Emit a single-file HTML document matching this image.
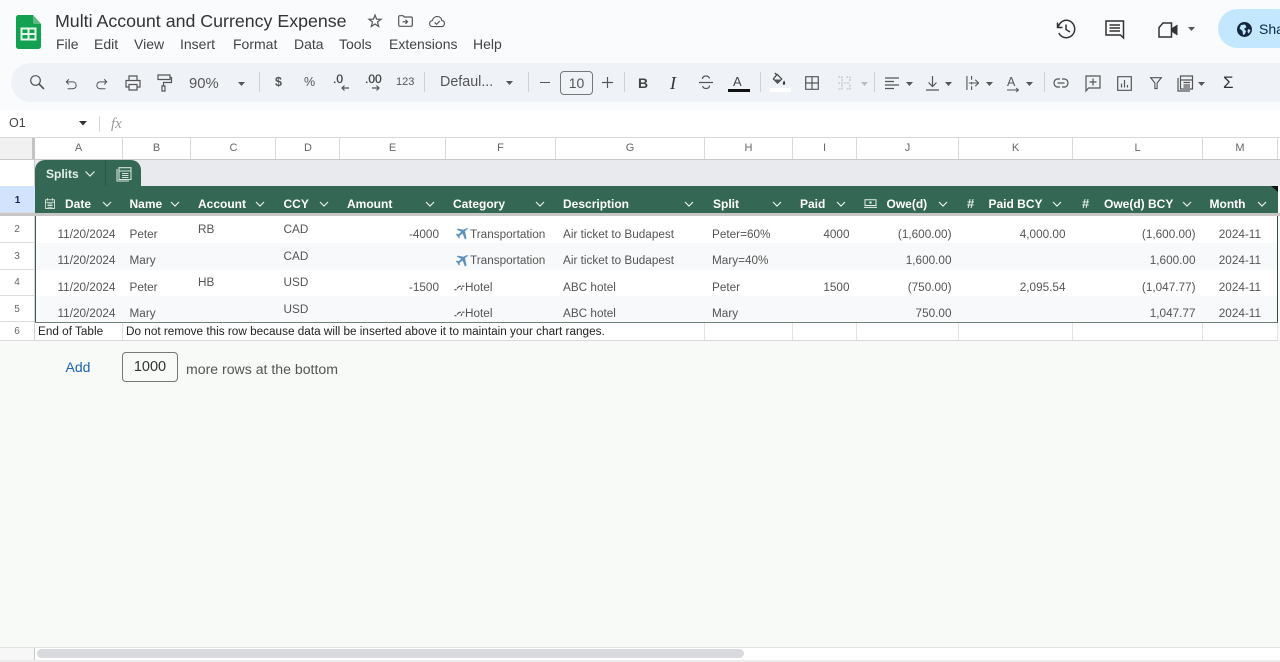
<!DOCTYPE html>
<html><head><meta charset="utf-8"><style>
html,body{margin:0;padding:0}
body{width:1280px;height:662px;overflow:hidden;position:relative;background:#f8faf7;font-family:"Liberation Sans",sans-serif;color:#444;filter:blur(.3px)}
div,span.a{position:absolute}
.t{position:absolute;white-space:nowrap;line-height:14px}
.m{font-size:14px;color:#444;top:36px;line-height:16px}
.ch{position:absolute;top:138px;height:21px;line-height:21px;text-align:center;font-size:11px;color:#666;background:#fff;border-right:1px solid #d9d9d9;box-sizing:border-box}
.rh{position:absolute;left:0;width:35px;text-align:center;font-size:10px;color:#666;background:#fff;border-bottom:1px solid #dcdcdc;box-sizing:border-box;border-right:1px solid #d4d4d4}
.h{position:absolute;top:197px;font-size:12px;font-weight:bold;color:#fff;white-space:nowrap;line-height:14px}
.c{position:absolute;font-size:11.75px;color:#555;white-space:nowrap;line-height:14px}
.r{text-align:right}
svg{position:absolute;overflow:visible}
.i{fill:none;stroke:#555;stroke-width:1.2}
</style></head><body>

<!-- top area -->
<div style="left:0;top:0;width:1280px;height:110px;background:#f9fbfd"></div>
<svg style="left:16px;top:15px" width="26" height="34" viewBox="0 0 26 34"><path d="M2.5 0H17L25 9V31.5a2.5 2.5 0 0 1-2.5 2.5H2.500A2.500 2.500 0 0 1 0 31.500V2.500A2.500 2.500 0 0 1 2.500 0z" fill="#12a150"/><path d="M17 0L25 9H18.500A1.500 1.500 0 0 1 17 7.500z" fill="#5dbb86"/><path d="M5.500 13.500H19.500V24.500H5.500zM5.500 19H19.500M12.500 13.500V24.500" fill="none" stroke="#e6f6ec" stroke-width="2"/></svg>
<div class="t" style="left:55px;top:11px;font-size:17.8px;line-height:20px;color:#333">Multi Account and Currency Expense</div>
<svg style="left:367px;top:13px" width="16" height="16" viewBox="0 0 16 16"><path d="M8 2L9.600 6.200H14L10.500 9L11.700 13.500L8 11L4.300 13.500L5.500 9L2 6.200H6.400z" class="i"/></svg>
<svg style="left:398px;top:15px" width="15" height="12" viewBox="0 0 15 12"><path d="M.7 1.800C.7 1 1.200.7 2 .7H5L6.300 2H13C13.800 2 14.300 2.500 14.300 3.200V10C14.300 10.800 13.800 11.300 13 11.300H2C1.200 11.300 .7 10.800 .7 10zM4.500 6.800H9.500M7.500 4.800L9.500 6.800L7.500 8.800" class="i"/></svg>
<svg style="left:428px;top:15px" width="18" height="13" viewBox="0 0 18 14"><path d="M4.500 12.500C2.300 12.500 1 11 1 9.200C1 7.500 2.200 6.200 3.900 6C4.600 3.500 6.600 1.500 9.300 1.500C12 1.500 14 3.500 14.300 6C16 6.200 17 7.500 17 9.200C17 11 15.700 12.500 14 12.500zM6.500 8L8.500 10L12 6.500" class="i"/></svg>

<div class="t m" style="left:56px">File</div>
<div class="t m" style="left:94px">Edit</div>
<div class="t m" style="left:134px">View</div>
<div class="t m" style="left:180px">Insert</div>
<div class="t m" style="left:233px">Format</div>
<div class="t m" style="left:294px">Data</div>
<div class="t m" style="left:339px">Tools</div>
<div class="t m" style="left:389px">Extensions</div>
<div class="t m" style="left:473px">Help</div>

<svg style="left:1056px;top:19px" width="20" height="20" viewBox="0 0 20 20"><path d="M1.500 3.500V8.500H6.500M2 8.500C3 4.500 6.200 1.300 10.300 1.300C15 1.300 18.700 5.200 18.700 10C18.700 14.800 15 18.700 10.300 18.700C7 18.700 4.200 16.800 2.800 14M10 5.500V10.500L14 13" fill="none" stroke="#333" stroke-width="1.500"/></svg>
<svg style="left:1105px;top:20px" width="20" height="20" viewBox="0 0 20 20"><path d="M1 1H18.500V18L15.500 15H1zM4.500 5H15M4.500 8H15M4.500 11H15" fill="none" stroke="#333" stroke-width="1.500"/></svg>
<svg style="left:1158px;top:22px" width="21" height="16" viewBox="0 0 21 16"><path d="M5 1H13.500V15H1V5.500z" fill="none" stroke="#333" stroke-width="1.500"/><path d="M14 6L19.500 2.500V13.500L14 10z" fill="#333"/></svg>
<svg style="left:1188px;top:27px" width="7" height="4"><path d="M0 0H7L3.500 4z" fill="#555"/></svg>
<div style="left:1218px;top:9px;width:80px;height:39px;border-radius:20px;background:#c2e7ff"></div>
<svg style="left:1237px;top:22px" width="15" height="15" viewBox="0 0 15 15"><circle cx="7.500" cy="7.500" r="7.500" fill="#14283c"/><path d="M4 3L8 2.500L9.500 5L7 7L9 9L8 12L6 13L5.500 9L2.500 6.500zM11 7L13.500 8L12 11.500L10.500 10z" fill="#c2e7ff"/></svg>
<div class="t" style="left:1259px;top:21px;font-size:14px;line-height:17px;color:#0b2a42">Sha</div>

<!-- toolbar -->
<div style="left:11px;top:63px;width:1269px;height:39px;border-radius:20px 0 0 20px;background:#eff3f8"></div>
<svg style="left:29px;top:74px" width="16" height="16" viewBox="0 0 16 16"><circle cx="6.500" cy="6.500" r="4.800" class="i"/><path d="M10 10L15 15" class="i" style="stroke-width:1.600"/></svg>
<svg style="left:65px;top:78px" width="12" height="12" viewBox="0 0 14 13"><path d="M4.500 1L1.500 4L4.500 7M1.500 4H9C11.500 4 13 5.700 13 8C13 10.300 11.500 12 9 12H3" class="i"/></svg>
<svg style="left:96px;top:78px" width="12" height="12" viewBox="0 0 14 13"><path d="M9.500 1L12.500 4L9.500 7M12.500 4H5C2.500 4 1 5.700 1 8C1 10.300 2.500 12 5 12H11" class="i"/></svg>
<svg style="left:125px;top:75px" width="16" height="16" viewBox="0 0 16 16"><path d="M4 5V1H12V5M4 12H1V5.500H15V12H12M4 9.500H12V15H4z" class="i"/></svg>
<svg style="left:157px;top:74px" width="15" height="18" viewBox="0 0 15 18"><path d="M1 1H13V5.500H1zM13 3.500H14.500V8.500H6.500V12M5 12H8V17H5z" class="i"/></svg>
<div class="t" style="left:189px;top:76px;font-size:14.8px;line-height:16px;color:#555">90%</div>
<svg style="left:238px;top:82px" width="7" height="4"><path d="M0 0H7L3.500 4z" fill="#555"/></svg>
<div style="left:259px;top:72px;width:1px;height:20px;background:#d0d0d0"></div>
<div class="t" style="left:275px;top:75px;font-size:12.500px;line-height:15px;color:#555;font-weight:bold">$</div>
<div class="t" style="left:304px;top:75px;font-size:12.500px;line-height:15px;color:#555">%</div>
<div class="t" style="left:333px;top:72px;font-size:12px;line-height:14px;color:#444;-webkit-text-stroke:.3px #444">.0</div>
<svg style="left:341px;top:85px" width="8" height="6"><path d="M8 3H1M3.500 .5L1 3L3.500 5.500" class="i"/></svg>
<div class="t" style="left:365px;top:72px;font-size:12px;line-height:14px;color:#444;-webkit-text-stroke:.3px #444">.00</div>
<svg style="left:372px;top:85px" width="8" height="6"><path d="M0 3H7M4.500 .5L7 3L4.500 5.500" class="i"/></svg>
<div class="t" style="left:396px;top:76px;font-size:11px;line-height:13px;color:#555">123</div>
<div style="left:424px;top:72px;width:1px;height:20px;background:#d0d0d0"></div>
<div class="t" style="left:440px;top:74px;font-size:14.3px;line-height:16px;color:#555">Defaul...</div>
<svg style="left:506px;top:81px" width="7" height="4"><path d="M0 0H7L3.500 4z" fill="#555"/></svg>
<div style="left:528px;top:72px;width:1px;height:20px;background:#d0d0d0"></div>
<div style="left:540px;top:82px;width:10px;height:1px;background:#555"></div>
<div style="left:560px;top:71px;width:31px;height:22px;border:1px solid #777;border-radius:4px;text-align:center;line-height:22px;font-size:14px;color:#555">10</div>
<svg style="left:602px;top:77px" width="11" height="11"><path d="M5.500 0V11M0 5.500H11" stroke="#555" stroke-width="1.200"/></svg>
<div style="left:624px;top:72px;width:1px;height:20px;background:#d0d0d0"></div>
<div class="t" style="left:638px;top:75px;font-size:14px;font-weight:bold;line-height:16px;color:#444">B</div>
<div class="t" style="left:670px;top:74px;font-family:'Liberation Serif',serif;font-size:18px;font-style:italic;line-height:18px;color:#333">I</div>
<svg style="left:699px;top:75px" width="14" height="15" viewBox="0 0 14 15"><path d="M0 7.500H14M10.500 3.500C10 1.800 8.500 1 7 1C5 1 3.500 2 3.500 4M3.500 11C4 12.800 5.500 13.500 7 13.500C9 13.500 10.500 12.500 10.500 10.500" class="i"/></svg>
<div class="t" style="left:733px;top:74px;font-size:13px;line-height:15px;color:#444">A</div>
<div style="left:728px;top:89px;width:22px;height:3px;background:#111"></div>
<div style="left:760px;top:72px;width:1px;height:20px;background:#d0d0d0"></div>
<svg style="left:771px;top:72px" width="15" height="14" viewBox="0 0 16 15"><path d="M4 1L6.500 3.500M6.500 2.500L11.500 7.500L7 12L2.500 7.500z" fill="none" stroke="#444" stroke-width="1.300"/><path d="M3 8H11L7 12z" fill="#555"/><path d="M14 9C15 11 15.500 12 15 13C14.500 14 13 14 12.700 13C12.300 12 13 11 14 9z" fill="#333"/></svg>
<div style="left:770px;top:88px;width:21px;height:4px;background:#fff"></div>
<svg style="left:805px;top:76px" width="14" height="14" viewBox="0 0 14 14"><path d="M.7.700H13.300V13.300H.7zM7 .7V13.300M.7 7H13.300" class="i"/></svg>
<svg style="left:837px;top:76px" width="14" height="14" viewBox="0 0 14 14"><path d="M1 1H5V5.500M5 8.500V13H1M9 1H13V5.500M13 8.500V13H9M1 7H13" fill="none" stroke="#b8bbbe" stroke-width="1.100" stroke-dasharray="2 1"/></svg>
<svg style="left:861px;top:82px" width="7" height="4"><path d="M0 0H7L3.500 4z" fill="#bbb"/></svg>
<div style="left:874px;top:72px;width:1px;height:20px;background:#d0d0d0"></div>
<svg style="left:885px;top:77px" width="14" height="13" viewBox="0 0 14 13"><path d="M0 1H14M0 4.500H9M0 8H14M0 11.500H9" stroke="#555" stroke-width="1.200"/></svg>
<svg style="left:906px;top:82px" width="7" height="4"><path d="M0 0H7L3.500 4z" fill="#555"/></svg>
<svg style="left:926px;top:76px" width="13" height="15" viewBox="0 0 13 15"><path d="M6.500 0V10M2.500 6.500L6.500 10.500L10.500 6.500M0 14H13" class="i"/></svg>
<svg style="left:945px;top:82px" width="7" height="4"><path d="M0 0H7L3.500 4z" fill="#555"/></svg>
<svg style="left:966px;top:76px" width="13" height="14" viewBox="0 0 14 15"><path d="M1 0V15M6 0V4M6 6.500V9M6 11V15M3 7.500H13M10 4L13.500 7.500L10 11" class="i"/></svg>
<svg style="left:986px;top:82px" width="7" height="4"><path d="M0 0H7L3.500 4z" fill="#555"/></svg>
<div class="t" style="left:1007px;top:75px;font-size:12.500px;line-height:14px;color:#555">A</div>
<svg style="left:1007px;top:88px" width="13" height="4"><path d="M0 2H11M9 0L11.500 2L9 4" class="i" style="stroke-width:1"/></svg>
<svg style="left:1026px;top:82px" width="7" height="4"><path d="M0 0H7L3.500 4z" fill="#555"/></svg>
<div style="left:1044px;top:72px;width:1px;height:20px;background:#d0d0d0"></div>
<svg style="left:1053px;top:78px" width="16" height="10" viewBox="0 0 16 10"><path d="M7 1H4.500C2.500 1 1 2.800 1 5C1 7.200 2.500 9 4.500 9H7M9 1H11.500C13.500 1 15 2.800 15 5C15 7.200 13.500 9 11.500 9H9M4.500 5H11.500" class="i"/></svg>
<svg style="left:1085px;top:75px" width="16" height="17" viewBox="0 0 16 17"><path d="M1 1H15V13H3.500L1 16zM8 3.500V10.500M4.500 7H11.500" class="i"/></svg>
<svg style="left:1117px;top:76px" width="15" height="15" viewBox="0 0 15 15"><path d="M.7.700H14.300V14.300H.7zM4.500 11.500V7.500M7.500 11.500V4M10.500 11.500V9" class="i"/></svg>
<svg style="left:1150px;top:77px" width="12" height="12" viewBox="0 0 13 13"><path d="M.7.700H12.300L7.700 6.500V12.500H5.300V6.500z" class="i"/></svg>
<svg style="left:1177px;top:75px" width="16" height="17" viewBox="0 0 16 17"><path d="M1 3V16H13M3.500 1H15.500V14H3.500zM3.500 5H15.500M6.500 7.500H13M6.500 10H13M6.500 12H13" class="i"/></svg>
<svg style="left:1198px;top:82px" width="7" height="4"><path d="M0 0H7L3.500 4z" fill="#555"/></svg>
<div class="t" style="left:1223px;top:74px;font-size:17px;line-height:18px;color:#333">Σ</div>

<!-- formula bar -->
<div style="left:0;top:110px;width:1280px;height:28px;background:#fff;border-bottom:1px solid #d9d9d9;box-sizing:border-box"></div>
<div class="t" style="left:9px;top:116px;font-size:12.500px;color:#444">O1</div>
<svg style="left:79px;top:121px" width="8" height="5"><path d="M0 0H8L4 4.500z" fill="#333"/></svg>
<div style="left:99px;top:116px;width:1px;height:16px;background:#d5d5d5"></div>
<div class="t" style="left:111px;top:117px;font-family:'Liberation Serif',serif;font-style:italic;font-size:15px;color:#999">fx</div>

<!-- column headers -->
<div style="left:0;top:138px;width:35px;height:21px;background:#f1f1f1;border-right:3px solid #c4c4c4;box-sizing:border-box"></div>
<div class="ch" style="left:35px;width:88px">A</div>
<div class="ch" style="left:123px;width:68px">B</div>
<div class="ch" style="left:191px;width:85px;padding-left:1px">C</div>
<div class="ch" style="left:276px;width:64px;padding-left:1px">D</div>
<div class="ch" style="left:340px;width:106px">E</div>
<div class="ch" style="left:446px;width:110px">F</div>
<div class="ch" style="left:556px;width:149px">G</div>
<div class="ch" style="left:705px;width:88px">H</div>
<div class="ch" style="left:793px;width:64px">I</div>
<div class="ch" style="left:857px;width:102px">J</div>
<div class="ch" style="left:959px;width:114px">K</div>
<div class="ch" style="left:1073px;width:130px">L</div>
<div class="ch" style="left:1203px;width:75px">M</div>
<div style="left:1278px;top:138px;width:2px;height:21px;background:#fff"></div>
<div style="left:0;top:159px;width:1280px;height:1px;background:#c9c9c9"></div>

<!-- row 0 band and tab -->
<div style="left:35px;top:160px;width:1245px;height:26px;background:#e8eaed"></div>
<div style="left:0;top:160px;width:35px;height:26px;background:#fff;border-right:1px solid #ccc;box-sizing:border-box"></div>
<div style="left:35px;top:160px;width:106px;height:26px;background:#356854;border-radius:10px 10px 0 0"></div>
<div style="left:105px;top:160px;width:1px;height:26px;background:#2a5745"></div>
<div class="t" style="left:46px;top:167px;font-size:12px;font-weight:bold;color:#e6efea">Splits</div>
<svg style="left:85px;top:171px" width="10" height="6"><path d="M.5.500L5 5L9.500.500" fill="none" stroke="#e6efea" stroke-width="1.200"/></svg>
<svg style="left:116px;top:167px" width="16" height="15" viewBox="0 0 16 15"><path d="M1 2V14H13M3 .7H15V12.500H3zM3 4H15M6 6.500H12.500M6 8.500H12.500M6 10.500H12.500" fill="none" stroke="#d5e3dc" stroke-width="1.100"/></svg>

<!-- row headers -->
<div class="rh" style="top:186px;height:27px;line-height:29px;background:#d3e3fd;color:#0b2a55;font-weight:bold;border-right:0">1</div>
<div style="left:0;top:213px;width:1280px;height:3px;background:#c7c7c7"></div>
<div class="rh" style="top:216px;height:27px;line-height:27px">2</div>
<div class="rh" style="top:243px;height:27px;line-height:27px">3</div>
<div class="rh" style="top:270px;height:26px;line-height:26px">4</div>
<div class="rh" style="top:296px;height:26px;line-height:27px">5</div>
<div class="rh" style="top:322px;height:19px;line-height:19px">6</div>

<!-- table header -->
<div style="left:35px;top:186px;width:1243px;height:27px;background:#356854"></div>
<svg style="left:1271px;top:186px" width="7" height="6"><path d="M0 0H7V6z" fill="#111"/></svg>
<svg style="left:45px;top:198px" width="10" height="11" viewBox="0 0 12 13"><path d="M.6 2H11.400V12.400H.6zM.6 5H11.400M3 .2V3M9 .2V3M3 7H9M3 9H9M3 11H9" fill="none" stroke="#e6efea" stroke-width="1"/></svg>
<div class="h" style="left:65px">Date</div>
<div class="h" style="left:129.500px">Name</div>
<div class="h" style="left:198px">Account</div>
<div class="h" style="left:283.500px">CCY</div>
<div class="h" style="left:347px">Amount</div>
<div class="h" style="left:453px">Category</div>
<div class="h" style="left:563px">Description</div>
<div class="h" style="left:713px">Split</div>
<div class="h" style="left:800px">Paid</div>
<svg style="left:864px;top:199px" width="13" height="9" viewBox="0 0 13 9"><path d="M1 .7H12V6.500H1zM0 8.400H13" fill="none" stroke="#e6efea"/><circle cx="6.500" cy="3.600" r="1.200" fill="#e6efea"/></svg>
<div class="h" style="left:886.500px">Owe(d)</div>
<div class="t" style="left:967px;top:197px;font-size:13px;font-weight:bold;color:#dfe9e4">#</div>
<div class="h" style="left:988.500px">Paid BCY</div>
<div class="t" style="left:1082px;top:197px;font-size:13px;font-weight:bold;color:#dfe9e4">#</div>
<div class="h" style="left:1104px">Owe(d) BCY</div>
<div class="h" style="left:1209.500px">Month</div>

<svg style="left:0;top:0;width:1280px;height:662px" viewBox="0 0 1280 662" fill="none" stroke="#e6efea" stroke-width="1.200"><path d="M103 202l4 4l4-4M171 202l4 4l4-4M256 202l4 4l4-4M320 202l4 4l4-4M426 202l4 4l4-4M536 202l4 4l4-4M685 202l4 4l4-4M773 202l4 4l4-4M837 202l4 4l4-4M939 202l4 4l4-4M1053 202l4 4l4-4M1183 202l4 4l4-4M1258 202l4 4l4-4"/></svg>

<!-- data rows -->
<div style="left:35px;top:216px;width:1243px;height:27px;background:#fff"></div>
<div style="left:35px;top:243px;width:1243px;height:27px;background:#f7f9fa"></div>
<div style="left:35px;top:270px;width:1243px;height:26px;background:#fff"></div>
<div style="left:35px;top:296px;width:1243px;height:26px;background:#f7f9fa"></div>
<div style="left:35px;top:216px;width:1px;height:106px;background:#3d5a4e"></div>
<div style="left:1277px;top:216px;width:1px;height:106px;background:#2f4f42"></div>
<div style="left:35px;top:322px;width:1243px;height:1px;background:#6e8278"></div>

<div class="c" style="left:57.500px;top:228px">11/20/2024</div>
<div class="c" style="left:129.500px;top:228px">Peter</div>
<div class="c" style="left:198px;top:223px">RB</div>
<div class="c" style="left:283.500px;top:223px">CAD</div>
<div class="c r" style="right:841px;top:228px">-4000</div>
<div class="c" style="left:470px;top:228px">Transportation</div>
<div class="c" style="left:563px;top:228px">Air ticket to Budapest</div>
<div class="c" style="left:712px;top:228px">Peter=60%</div>
<div class="c r" style="right:430.500px;top:228px">4000</div>
<div class="c r" style="right:328.500px;top:228px">(1,600.00)</div>
<div class="c r" style="right:214.500px;top:228px">4,000.00</div>
<div class="c r" style="right:84.500px;top:228px">(1,600.00)</div>
<div class="c r" style="right:19px;top:228px">2024-11</div>

<div class="c" style="left:57.500px;top:254px">11/20/2024</div>
<div class="c" style="left:129.500px;top:254px">Mary</div>
<div class="c" style="left:283.500px;top:250px">CAD</div>
<div class="c" style="left:470px;top:254px">Transportation</div>
<div class="c" style="left:563px;top:254px">Air ticket to Budapest</div>
<div class="c" style="left:712px;top:254px">Mary=40%</div>
<div class="c r" style="right:328.500px;top:254px">1,600.00</div>
<div class="c r" style="right:84.500px;top:254px">1,600.00</div>
<div class="c r" style="right:19px;top:254px">2024-11</div>

<div class="c" style="left:57.500px;top:281px">11/20/2024</div>
<div class="c" style="left:129.500px;top:281px">Peter</div>
<div class="c" style="left:198px;top:276px">HB</div>
<div class="c" style="left:283.500px;top:276px">USD</div>
<div class="c r" style="right:841px;top:281px">-1500</div>
<div class="c" style="left:465px;top:281px">Hotel</div>
<div class="c" style="left:563px;top:281px">ABC hotel</div>
<div class="c" style="left:712px;top:281px">Peter</div>
<div class="c r" style="right:430.500px;top:281px">1500</div>
<div class="c r" style="right:328.500px;top:281px">(750.00)</div>
<div class="c r" style="right:214.500px;top:281px">2,095.54</div>
<div class="c r" style="right:84.500px;top:281px">(1,047.77)</div>
<div class="c r" style="right:19px;top:281px">2024-11</div>

<div class="c" style="left:57.500px;top:307px">11/20/2024</div>
<div class="c" style="left:129.500px;top:307px">Mary</div>
<div class="c" style="left:283.500px;top:303px">USD</div>
<div class="c" style="left:465px;top:307px">Hotel</div>
<div class="c" style="left:563px;top:307px">ABC hotel</div>
<div class="c" style="left:712px;top:307px">Mary</div>
<div class="c r" style="right:328.500px;top:307px">750.00</div>
<div class="c r" style="right:84.500px;top:307px">1,047.77</div>
<div class="c r" style="right:19px;top:307px">2024-11</div>

<svg style="left:456px;top:228px" width="13" height="12" viewBox="0 0 13 12"><path d="M12.500.5L9 3L10.500 10.500L9 11.500L6.500 5.500L3.500 8L3.800 10L2.800 10.500L1.500 8L0 6.500L.5 5.500L2.500 6.200L5.300 3.700L.8 1.800L1.800.6L7.500 1.700L10.500.2z" fill="#5b93c0"/></svg>
<svg style="left:456px;top:255px" width="13" height="12" viewBox="0 0 13 12"><path d="M12.500.5L9 3L10.500 10.500L9 11.500L6.500 5.500L3.500 8L3.800 10L2.800 10.500L1.500 8L0 6.500L.5 5.500L2.500 6.200L5.300 3.700L.8 1.800L1.800.6L7.500 1.700L10.500.2z" fill="#5b93c0"/></svg>
<svg style="left:454px;top:285px" width="11" height="6" viewBox="0 0 11 6"><path d="M.5 4.500L2.500 4.800M3 3.500L5 1.500L7 1.200M7 5L8 2.500M8 1.200H10.500" fill="none" stroke="#555" stroke-width="1.200"/></svg>
<svg style="left:454px;top:311px" width="11" height="6" viewBox="0 0 11 6"><path d="M.5 4.500L2.500 4.800M3 3.500L5 1.500L7 1.200M7 5L8 2.500M8 1.200H10.500" fill="none" stroke="#555" stroke-width="1.200"/></svg>

<!-- row 6 -->
<div style="left:35px;top:323px;width:1243px;height:18px;background:#fff;border-bottom:1px solid #d9d9d9;box-sizing:border-box"></div>
<svg style="left:0;top:0;width:1280px;height:662px" viewBox="0 0 1280 662"><path d="M122.500 323V340M704.500 323V340M792.500 323V340M856.500 323V340M958.500 323V340M1072.500 323V340M1202.500 323V340M1277.500 323V340" stroke="#e4e4e4"/></svg>
<div class="c" style="left:38px;top:325px;color:#222">End of Table</div>
<div class="c" style="left:126px;top:325px;color:#222">Do not remove this row because data will be inserted above it to maintain your chart ranges.</div>

<!-- add rows -->
<div class="t" style="left:65.500px;top:359px;font-size:14px;line-height:16px;color:#1a63b8">Add</div>
<div style="left:122px;top:352px;width:54px;height:28px;border:1px solid #777;border-radius:4px;text-align:center;line-height:28px;font-size:14.500px;color:#333">1000</div>
<div class="t" style="left:186px;top:361px;font-size:14.1px;line-height:16px;color:#555">more rows at the bottom</div>

<!-- bottom scrollbar -->
<div style="left:0;top:647px;width:1280px;height:15px;background:#fff;border-top:1px solid #e2e2e2;box-sizing:border-box"></div>
<div style="left:0;top:648px;width:34px;height:13px;background:#f7f7f7;border-right:1px solid #c9c9c9"></div>
<div style="left:37px;top:649px;width:707px;height:9px;border-radius:5px;background:#d9dade"></div>
<div style="left:0;top:660px;width:1280px;height:2px;background:#ececec"></div>

</body></html>
